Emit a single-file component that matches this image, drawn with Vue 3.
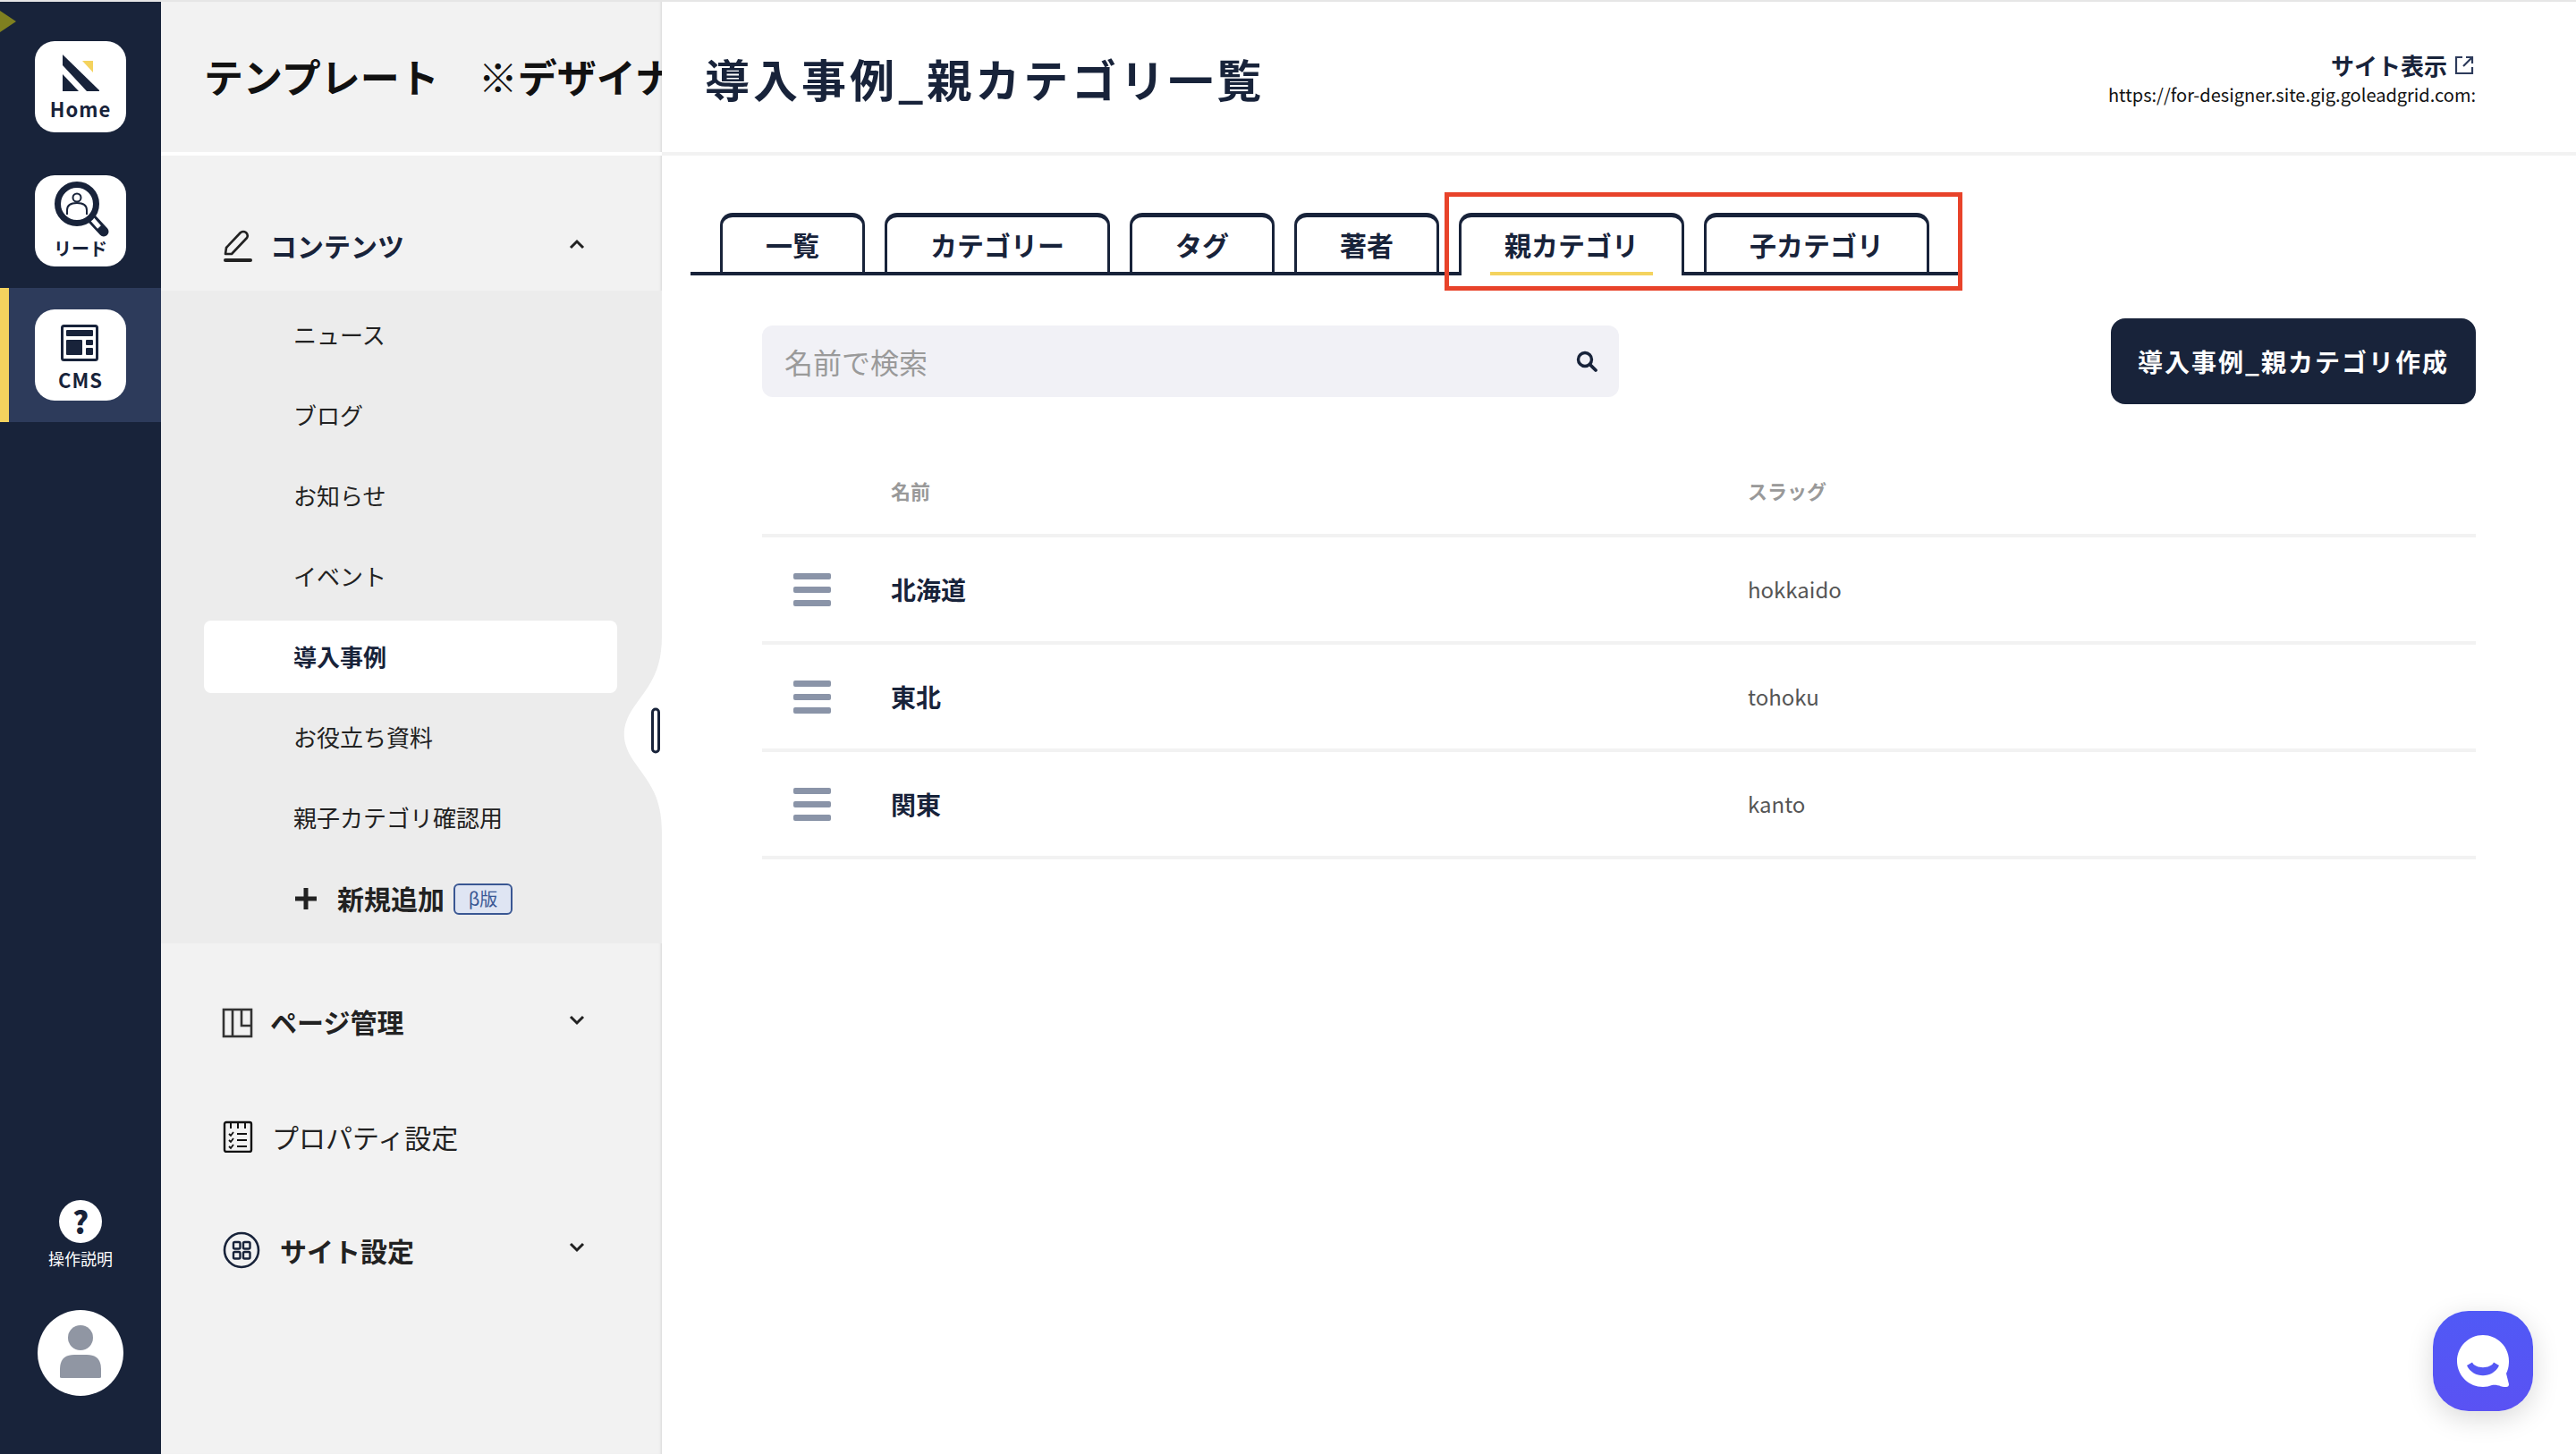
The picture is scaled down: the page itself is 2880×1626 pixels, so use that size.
<script setup>
const subItems = [
  { label: 'ニュース' },
  { label: 'ブログ' },
  { label: 'お知らせ' },
  { label: 'イベント' },
  { label: '導入事例', active: true },
  { label: 'お役立ち資料' },
  { label: '親子カテゴリ確認用' }
]

const tabs = [
  { label: '一覧' },
  { label: 'カテゴリー' },
  { label: 'タグ' },
  { label: '著者' },
  { label: '親カテゴリ', active: true },
  { label: '子カテゴリ' }
]

const rows = [
  { name: '北海道', slug: 'hokkaido' },
  { name: '東北', slug: 'tohoku' },
  { name: '関東', slug: 'kanto' }
]
</script>

<template>
  <div class="shell">
    <span class="corner-mark"></span>

    <aside class="rail">
      <div class="rail-item">
        <div class="tile">
          <svg width="102" height="62" viewBox="0 0 102 62">
            <polygon points="31,15 72,55 72,56 58,56 31,27" fill="#18233a" />
            <polygon points="31,37 49,56 31,56" fill="#18233a" />
            <polygon points="53,22 65,22 65,35" fill="#f4d35e" />
          </svg>
          <span class="tile-label tile-home">Home</span>
        </div>
      </div>
      <div class="rail-item">
        <div class="tile">
          <svg width="102" height="70" viewBox="0 0 102 70">
            <path d="M64 49 L77 63" stroke="#18233a" stroke-width="11" stroke-linecap="round" />
            <path d="M64 49 L72 58" stroke="#fff" stroke-width="5" />
            <circle cx="47" cy="32" r="21.5" fill="#fff" stroke="#18233a" stroke-width="7" />
            <circle cx="47" cy="25" r="4.5" fill="none" stroke="#18233a" stroke-width="2" />
            <path d="M36 44 V39 Q36 31 47 31 Q58 31 58 39 V44" fill="none" stroke="#18233a" stroke-width="2" />
          </svg>
          <span class="tile-label tile-lead">リード</span>
        </div>
      </div>
      <div class="rail-item rail-item-active">
        <div class="tile">
          <svg width="102" height="66" viewBox="0 0 102 66">
            <rect x="30.5" y="18.5" width="39" height="38" rx="2" fill="none" stroke="#18233a" stroke-width="3" />
            <rect x="35" y="23" width="30" height="7" rx="1" fill="#18233a" />
            <rect x="35" y="34" width="18" height="17" rx="1" fill="#18233a" />
            <rect x="57" y="34" width="8" height="6" rx="1" fill="#18233a" />
            <rect x="57" y="43" width="8" height="8" rx="1" fill="#18233a" />
          </svg>
          <span class="tile-label tile-cms">CMS</span>
        </div>
      </div>

      <div class="rail-bottom">
        <div class="help-circle">?</div>
        <div class="help-label">操作説明</div>
        <div class="avatar">
          <svg width="96" height="96" viewBox="0 0 96 96">
            <ellipse cx="48" cy="31" rx="14" ry="14" fill="#9096a3" />
            <path d="M25 75 V66 Q25 50 41 50 H55 Q71 50 71 66 V75 Q71 76 69 76 H27 Q25 76 25 75Z" fill="#9096a3" />
          </svg>
        </div>
      </div>
    </aside>

    <nav class="side">
      <div class="side-head">
        <div class="side-title">テンプレート　※デザイナ</div>
      </div>

      <div class="nav-row row-contents">
        <svg class="row-icon" width="36" height="38" viewBox="0 0 36 38">
          <path d="M4 27 L5 20 L21 3 Q24 1 27 3 Q30 6 28 9 L11 27 Z" fill="none" stroke="#222" stroke-width="2.6" stroke-linejoin="round" />
          <rect x="2" y="32" width="32" height="4" rx="2" fill="#222" />
        </svg>
        <span class="row-label row-navy">コンテンツ</span>
        <svg class="chev" width="22" height="14" viewBox="0 0 22 14">
          <path d="M4 11 L11 4 L18 11" fill="none" stroke="#222" stroke-width="3" />
        </svg>
      </div>

      <div class="sub">
        <div v-for="item in subItems" :key="item.label" class="sub-item" :class="{ 'sub-item-active': item.active }">
          <span>{{ item.label }}</span>
        </div>
        <div class="sub-item sub-add">
          <svg width="24" height="24" viewBox="0 0 24 24">
            <path d="M12 0 V24 M0 12 H24" stroke="#222" stroke-width="5" />
          </svg>
          <span class="add-label">新規追加</span>
          <span class="beta">β版</span>
        </div>
      </div>

      <div class="nav-rows">
        <div class="nav-row row-pages">
          <svg class="row-icon" width="36" height="34" viewBox="0 0 36 34">
            <rect x="2" y="2" width="31" height="30" fill="none" stroke="#333" stroke-width="2.6" />
            <path d="M12 2 V32 M22 2 V20 H33" fill="none" stroke="#333" stroke-width="2.6" />
          </svg>
          <span class="row-label">ページ管理</span>
          <svg class="chev" width="22" height="14" viewBox="0 0 22 14">
            <path d="M4 3 L11 10 L18 3" fill="none" stroke="#222" stroke-width="3" />
          </svg>
        </div>
        <div class="nav-row row-props">
          <svg class="row-icon" width="36" height="36" viewBox="0 0 36 36">
            <rect x="3" y="2" width="30" height="33" rx="2" fill="none" stroke="#111" stroke-width="2.4" />
            <path d="M10 2 V9 M18 2 V9 M26 2 V9" stroke="#111" stroke-width="2" />
            <path d="M8 15 L10 17 L13 13 M8 22 L10 24 L13 20 M8 29 L10 31 L13 27" fill="none" stroke="#111" stroke-width="1.8" />
            <path d="M17 15 H28 M17 22 H28 M17 29 H28" stroke="#111" stroke-width="2" />
          </svg>
          <span class="row-label row-regular">プロパティ設定</span>
        </div>
        <div class="nav-row row-site">
          <svg class="row-icon" width="42" height="42" viewBox="0 0 42 42">
            <circle cx="21" cy="21" r="19" fill="none" stroke="#18233a" stroke-width="2.6" />
            <rect x="12" y="12" width="7.5" height="7.5" rx="1.5" fill="none" stroke="#18233a" stroke-width="2.4" />
            <rect x="23" y="12" width="7.5" height="7.5" rx="1.5" fill="none" stroke="#18233a" stroke-width="2.4" />
            <rect x="12" y="23" width="7.5" height="7.5" rx="1.5" fill="none" stroke="#18233a" stroke-width="2.4" />
            <rect x="23" y="23" width="7.5" height="7.5" rx="1.5" fill="none" stroke="#18233a" stroke-width="2.4" />
          </svg>
          <span class="row-label">サイト設定</span>
          <svg class="chev" width="22" height="14" viewBox="0 0 22 14">
            <path d="M4 3 L11 10 L18 3" fill="none" stroke="#222" stroke-width="3" />
          </svg>
        </div>
      </div>

      <svg class="notch" width="44" height="220" viewBox="0 0 44 220">
        <path d="M44 0 C44 40 30 55 16 75 C-3 100 -3 120 16 145 C30 165 44 180 44 220 Z" fill="#fff" />
        <rect x="33.5" y="82" width="7" height="48" rx="3.5" fill="#fff" stroke="#18233a" stroke-width="3" />
      </svg>
    </nav>

    <main class="main">
      <header class="main-head">
        <h1 class="main-title">導入事例_親カテゴリ一覧</h1>
        <div class="site-link">
          <div class="site-view">
            <span>サイト表示</span>
            <svg width="22" height="22" viewBox="0 0 22 22">
              <path d="M9 2 H2 V20 H20 V13" fill="none" stroke="#2d3b5b" stroke-width="2.2" />
              <path d="M10 12 L20 2 M13 2 H20 V9" fill="none" stroke="#2d3b5b" stroke-width="2.2" />
            </svg>
          </div>
          <div class="site-url">https://for-designer.site.gig.goleadgrid.com:</div>
        </div>
      </header>

      <div class="tabs">
        <div v-for="tab in tabs" :key="tab.label" class="tab" :class="{ 'tab-active': tab.active }">
          {{ tab.label }}
          <span v-if="tab.active" class="tab-mark"></span>
        </div>
      </div>
      <div class="red-frame"></div>

      <section class="body">
        <div class="toolbar">
          <div class="search">
            <span class="search-text">名前で検索</span>
            <svg width="28" height="28" viewBox="0 0 28 28">
              <circle cx="12" cy="12" r="7.5" fill="none" stroke="#18233a" stroke-width="3.4" />
              <path d="M17.5 17.5 L24 24" stroke="#18233a" stroke-width="3.8" stroke-linecap="round" />
            </svg>
          </div>
          <button class="create-btn">導入事例_親カテゴリ作成</button>
        </div>

        <div class="table-head">
          <span></span>
          <span>名前</span>
          <span>スラッグ</span>
        </div>
        <div v-for="row in rows" :key="row.slug" class="table-row">
          <div class="handle">
            <i></i><i></i><i></i>
          </div>
          <div class="row-name">{{ row.name }}</div>
          <div class="row-slug">{{ row.slug }}</div>
        </div>
      </section>

      <div class="chat-btn">
        <svg width="112" height="112" viewBox="0 0 112 112">
          <path d="M56 27 C72 27 85 40 85 56 C85 62 84 66 82 70 L85 82 C85 84 84 85 82 85 C76 85 72 82 66 83 C63 84 60 85 56 85 C40 85 27 72 27 56 C27 40 40 27 56 27Z" fill="#fff" />
          <path d="M38 61 L44 57.5 C47 65 65 65 68 57.5 L74 61 C67 76 45 76 38 61Z" fill="#5558f5" />
        </svg>
      </div>
    </main>
  </div>
</template>

<style>
html,
body {
  margin: 0;
  background: #fff;
  overflow: hidden;
}
</style>

<style scoped>
* {
  box-sizing: border-box;
}

.shell {
  position: relative;
  display: flex;
  width: 2880px;
  height: 1626px;
  border-top: 2px solid #e6e6e6;
  font-family: "Noto Sans CJK JP", sans-serif;
  color: #222;
  overflow: hidden;
}

.corner-mark {
  position: absolute;
  left: 0;
  top: 10px;
  border-left: 18px solid #7f8020;
  border-top: 12px solid transparent;
  border-bottom: 12px solid transparent;
  z-index: 2;
}

.rail {
  width: 180px;
  flex-shrink: 0;
  display: flex;
  flex-direction: column;
  padding-top: 20px;
  background: #18233a;
}

.rail-item {
  height: 150px;
  display: flex;
  align-items: center;
  justify-content: center;
}

.rail-item-active {
  background: #2d3b5b;
  box-shadow: inset 10px 0 0 #f4d35e;
}

.tile {
  width: 102px;
  height: 102px;
  display: flex;
  flex-direction: column;
  align-items: center;
  background: #fff;
  border-radius: 22px;
  color: #18233a;
  font-weight: 700;
  line-height: 1;
}

.tile svg {
  display: block;
  flex-shrink: 0;
}

.tile-home {
  font-size: 22px;
  line-height: 26px;
  letter-spacing: 1px;
}

.tile-lead {
  font-size: 20px;
  line-height: 24px;
}

.tile-cms {
  font-size: 22px;
  line-height: 24px;
  letter-spacing: 1px;
}

.rail-bottom {
  margin-top: auto;
  padding-bottom: 65px;
  display: flex;
  flex-direction: column;
  align-items: center;
}

.help-circle {
  width: 48px;
  height: 48px;
  border-radius: 50%;
  background: #fff;
  color: #18233a;
  font-size: 34px;
  font-weight: 900;
  line-height: 48px;
  text-align: center;
}

.help-label {
  margin-top: 3px;
  color: #fff;
  font-size: 18px;
  line-height: 28px;
}

.avatar {
  margin-top: 44px;
  width: 96px;
  height: 96px;
  border-radius: 50%;
  background: #fff;
}

.avatar svg {
  display: block;
}

.side {
  position: relative;
  width: 560px;
  flex-shrink: 0;
  display: flex;
  flex-direction: column;
  background: #f2f2f2;
  box-shadow: inset -3px 0 3px -2px #d6d6d6;
  overflow: hidden;
}

.side-head {
  height: 172px;
  flex-shrink: 0;
  border-bottom: 4px solid #fff;
  padding: 0 0 0 48px;
  display: flex;
  align-items: center;
  overflow: hidden;
}

.side-title {
  font-size: 44px;
  font-weight: 700;
  color: #111;
  white-space: nowrap;
  margin-top: -2px;
}

.nav-row {
  height: 127px;
  display: flex;
  align-items: center;
  padding: 0 84px 0 68px;
  font-size: 30px;
  font-weight: 700;
  flex-shrink: 0;
}

.row-contents {
  height: 151px;
  padding-top: 52px;
}

.row-icon {
  flex-shrink: 0;
}

.row-label {
  line-height: 1;
}

.row-contents .row-label,
.row-pages .row-label {
  margin-left: 18px;
  margin-top: -3px;
}

.row-props .row-label {
  margin-left: 20px;
}

.row-site .row-icon {
  margin-left: 1px;
}

.row-site .row-label {
  margin-left: 22px;
}

.row-navy {
  color: #18233a;
}

.row-regular {
  font-weight: 400;
}

.chev {
  margin-left: auto;
  margin-top: -6px;
}

.sub {
  background: #ececec;
  padding: 5px 0;
  flex-shrink: 0;
}

.sub-item {
  height: 90px;
  display: flex;
  align-items: center;
  padding: 0 0 4px 100px;
  margin: 0 48px;
  font-size: 26px;
}

.sub-item-active {
  position: relative;
  font-weight: 700;
  color: #18233a;
}

.sub-item-active::before {
  content: "";
  position: absolute;
  left: 0;
  right: 2px;
  top: 4px;
  bottom: 5px;
  background: #fff;
  border-radius: 8px;
}

.sub-item-active span {
  position: relative;
}

.sub-add {
  padding-left: 102px;
  padding-bottom: 0;
}

.add-label {
  margin-left: 23px;
  margin-top: -2px;
  font-size: 30px;
  font-weight: 700;
}

.beta {
  margin-left: 10px;
  width: 66px;
  height: 35px;
  background: #dfe5f3;
  border: 2px solid #3a5793;
  border-radius: 6px;
  color: #3a5793;
  font-size: 20px;
  line-height: 29px;
  text-align: center;
}

.nav-rows {
  padding-top: 25px;
}

.notch {
  position: absolute;
  right: 0;
  top: 709px;
}

.main {
  position: relative;
  flex: 1;
  min-width: 0;
  background: #fff;
}

.main-head {
  height: 172px;
  border-bottom: 4px solid #f2f2f2;
  display: flex;
  align-items: center;
  justify-content: space-between;
  padding: 0 112px 0 48px;
}

.main-title {
  margin: 2px 0 0;
  font-size: 50px;
  font-weight: 700;
  letter-spacing: 4px;
  color: #18233a;
}

.site-link {
  margin-top: 6px;
  text-align: right;
}

.site-view {
  display: flex;
  align-items: center;
  justify-content: flex-end;
  gap: 8px;
  font-size: 26px;
  font-weight: 700;
  line-height: 34px;
  color: #18233a;
  padding-right: 2px;
}

.site-url {
  font-size: 20px;
  line-height: 32px;
  color: #111;
}

.tabs {
  position: relative;
  display: flex;
  gap: 22px;
  margin: 64px 0 0 32px;
  padding-left: 33px;
  width: 1418px;
  height: 70px;
  border-bottom: 4px solid #18233a;
}

.tab {
  position: relative;
  height: 66px;
  padding: 0 48px 2px;
  display: flex;
  align-items: center;
  justify-content: center;
  border: 3px solid #18233a;
  border-top-width: 5px;
  border-bottom: none;
  border-radius: 14px 14px 0 0;
  background: #fff;
  font-size: 30px;
  font-weight: 700;
  color: #18233a;
  white-space: nowrap;
}

.tab-active {
  height: 70px;
  padding-bottom: 6px;
}

.tab-mark {
  position: absolute;
  left: 32px;
  right: 32px;
  bottom: 0;
  height: 4px;
  background: #f4d35e;
}

.red-frame {
  position: absolute;
  left: 875px;
  top: 213px;
  width: 579px;
  height: 110px;
  border: 5px solid #e8432a;
  pointer-events: none;
}

.body {
  padding: 48px 112px 0;
}

.toolbar {
  display: flex;
  align-items: center;
  justify-content: space-between;
}

.search {
  width: 958px;
  height: 80px;
  display: flex;
  align-items: center;
  justify-content: space-between;
  padding: 0 22px 0 25px;
  background: #f1f1f6;
  border-radius: 12px;
}

.search-text {
  font-size: 32px;
  color: #9a9a9a;
}

.create-btn {
  width: 408px;
  height: 96px;
  padding: 0;
  border: none;
  border-radius: 16px;
  background: #18233a;
  color: #fff;
  font-family: inherit;
  font-size: 28px;
  font-weight: 700;
  letter-spacing: 2px;
}

.table-head,
.table-row {
  display: grid;
  grid-template-columns: 144px 958px 1fr;
  align-items: center;
  border-bottom: 4px solid #f2f2f2;
}

.table-head {
  margin-top: 50px;
  height: 99px;
  padding-bottom: 4px;
  font-size: 22px;
  font-weight: 700;
  color: #999;
}

.table-row {
  height: 120px;
}

.handle {
  margin-left: 35px;
  width: 42px;
  display: flex;
  flex-direction: column;
  gap: 8px;
}

.handle i {
  display: block;
  height: 7px;
  border-radius: 2px;
  background: #8a94a8;
}

.row-name {
  font-size: 28px;
  font-weight: 700;
  color: #18233a;
}

.row-slug {
  padding-bottom: 2px;
  font-size: 24px;
  color: #555;
}

.chat-btn {
  position: absolute;
  left: 1980px;
  top: 1464px;
  width: 112px;
  height: 112px;
  border-radius: 40px;
  background: linear-gradient(#5059f6, #5a52f3);
  box-shadow: 0 8px 30px rgba(0, 0, 0, 0.15);
}

.chat-btn svg {
  display: block;
}
</style>
